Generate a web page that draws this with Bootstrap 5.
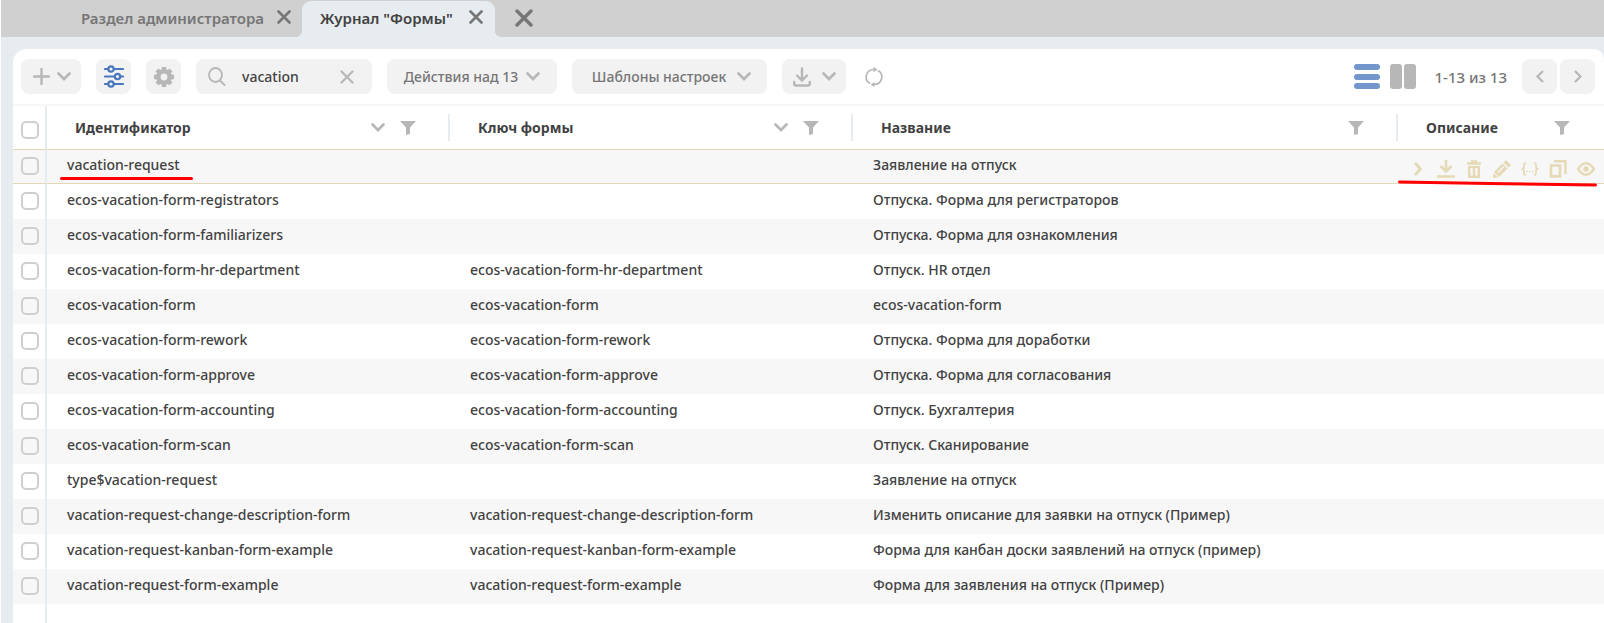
<!DOCTYPE html>
<html lang="ru">
<head>
<meta charset="utf-8">
<meta name="viewport" content="width=device-width, initial-scale=1">
<title>Журнал "Формы"</title>
<link href="https://cdn.jsdelivr.net/npm/bootstrap@5.3.0/dist/css/bootstrap.min.css" rel="stylesheet">
<style>
body { font-family: "Noto Sans", "Open Sans", sans-serif; font-size: 14px; font-weight: 500; line-height: 20px; color: #424242; background: #e6ecef; border-left: 1px solid #fff; overflow: hidden; }
svg { display: block; flex: none; fill: none; stroke: currentColor; }
button { font-weight: inherit; }
.tabs { height: 37px; background: #d0d0d0; padding-left: 64px; font-weight: 600; }
.tabs a { color: #767676; text-decoration: none; font-size: 15px; }
.tabs button { color: #767676; border: 0; background: none; padding: 0 0 2px; }
.tab-item { padding: 0 11px 2px 16px; gap: 13px; }
.tab-item.current { position: relative; background: #e6ecef; border-radius: 9px 9px 0 0; margin-top: 1px; padding: 0 12px 2px 18px; gap: 16px; }
.tab-item.current::before, .tab-item.current::after { content: ""; position: absolute; bottom: 0; width: 6px; height: 6px; }
.tab-item.current::before { right: 100%; background: radial-gradient(circle at 0 0, transparent 6px, #e6ecef 6px); }
.tab-item.current::after { left: 100%; background: radial-gradient(circle at 100% 0, transparent 6px, #e6ecef 6px); }
.tab-item.current a { color: #424242; }
.close-all { margin-left: 20px; }
.panel { background: #fff; margin: 12px 0 0 12px; border-radius: 14px 10px 0 0; }
.toolbar { padding: 10px 9px 10px 8px; gap: 15px; border-bottom: 2px solid #f7f7f7; }
.tool { height: 35px; border: 0; border-radius: 8px; background: #f2f2f2; color: #767676; padding: 0; display: flex; align-items: center; justify-content: center; }
.tool svg, .refresh { color: #b7b7b7; }
.tool.on svg { color: #4a76bd; }
.w-sq { width: 35px; }
.w-add { width: 60px; gap: 7px; padding-left: 2px; }
.w-find { width: 176px; padding: 0 18px 0 12px; }
.w-find input { width: 100%; min-width: 0; border: 0; background: none; outline: 0; color: #424242; font-weight: inherit; padding: 0 0 0 16px; }
.w-find button { border: 0; background: none; padding: 0; }
.w-act { width: 170px; gap: 8px; }
.w-tpl { width: 195px; gap: 11px; padding-left: 4px; }
.w-exp { width: 64px; gap: 11px; }
.plain { border: 0; background: none; padding: 0; }
.paging { font-size: 15px; color: #767676; }
.pages-text { font-size: 15px; margin: 0 15px 0 18px; }
.list-bars rect { fill: #7396cd; stroke: none; }
.col-bars rect { fill: #b7b7b7; stroke: none; }
.gap-view { margin-left: 10px; }
.gap-page { margin-left: 3px; }
.forms { table-layout: fixed; width: 100%; border-collapse: separate; border-spacing: 0; }
.forms .c-pick { width: 34px; }
.forms .c-key { width: 403px; }
.forms .c-desc { width: 206px; }
.forms th { height: 43px; padding: 0; font-weight: 700; }
.forms td { height: 35px; padding: 0 20px 4px; white-space: nowrap; }
.forms .pick { width: 34px; padding: 0 0 2px 8px; border-right: 2px solid #e6ecef; }
.forms th.pick { padding: 5px 0 0 8px; }
.head-cell { height: 27px; padding: 0 32px 0 28px; gap: 15px; border-right: 2px solid #e6ecef; color: #424242; }
.head-cell.last { border: 0; padding-right: 34px; }
.head-cell svg { color: #b7b7b7; }
.forms tbody tr:nth-child(odd) { background: #f7f7f7; }
.forms tr.hover td { border-top: 1px solid #e0d8b9; border-bottom: 1px solid #e0d8b9; }
.box { appearance: none; display: block; width: 18px; height: 18px; margin: 0; border: 2px solid #cfcfcf; border-radius: 5px; background: #fff; }
tbody tr:nth-child(odd) .box { background: transparent; }
.row-tools { color: #e5dab5; margin: 8px -11px 0 -9px; }
.forms .row-tools button { color: inherit; }
.forms td.marked { position: relative; }
.mark-id { position: absolute; left: 13px; bottom: 3px; width: 133px; height: 3px; }
.mark-tools { position: absolute; right: 7px; bottom: -4px; width: 199px; height: 7px; }
.rest > div { width: 34px; border-right: 2px solid #e6ecef; }
</style>
<script src="https://cdn.jsdelivr.net/npm/bootstrap@5.3.0/dist/js/bootstrap.bundle.min.js"></script>
</head>
<body class="d-flex flex-column vh-100">
<svg width="0" height="0" class="position-absolute" aria-hidden="true">
  <symbol id="x" viewBox="0 0 14 14"><path d="M1.5 1.5l11 11M12.5 1.5l-11 11" stroke-width="2.6" stroke-linecap="round"/></symbol>
  <symbol id="down" viewBox="0 0 14 9"><path d="M1.5 1.5L7 7l5.500-5.500" stroke-width="2.7" stroke-linecap="round"/></symbol>
  <symbol id="funnel" viewBox="0 0 16 14"><path d="M0 0h16l-6 6.500V13l-4 1V6.500z" fill="currentColor" stroke="none"/></symbol>
</svg>
<nav class="tabs d-flex align-items-stretch flex-shrink-0">
  <div class="tab-item d-flex align-items-center"><a href="#">Раздел администратора</a><button aria-label="Закрыть"><svg width="14" height="14"><use href="#x"/></svg></button></div>
  <div class="tab-item current d-flex align-items-center"><a href="#">Журнал "Формы"</a><button aria-label="Закрыть"><svg width="14" height="14"><use href="#x"/></svg></button></div>
  <button class="close-all" aria-label="Закрыть все"><svg width="18" height="18" viewBox="0 0 18 18"><path d="M2 2l14 14M16 2L2 16" stroke-width="3.4" stroke-linecap="round"/></svg></button>
</nav>
<main class="panel flex-grow-1 d-flex flex-column">
  <div class="toolbar d-flex align-items-center">
    <button class="tool w-add" aria-label="Создать"><svg width="17" height="17"><path d="M8.500 1v15M1 8.500h15" stroke-width="2.400" stroke-linecap="round"/></svg><svg width="14" height="9"><use href="#down"/></svg></button>
    <button class="tool w-sq on" aria-label="Фильтры"><svg width="20" height="24" viewBox="0 0 20 24" stroke-width="2.200" stroke-linecap="round"><path d="M1 4h3M10 4h9M1 11.500h9M17 11.500h2M1 19h3M10 19h9"/><circle cx="7" cy="4" r="2.700"/><circle cx="13.500" cy="11.500" r="2.700"/><circle cx="7" cy="19" r="2.700"/></svg></button>
    <button class="tool w-sq" aria-label="Настройки"><svg width="20" height="20" viewBox="0 0 20 20"><circle cx="10" cy="10" r="5.700" stroke-width="4.600"/><path d="M10 0v4M10 16v4M0 10h4M16 10h4M3 3l3 3M14 14l3 3M17 3l-3 3M6 14l-3 3" stroke-width="4.400"/></svg></button>
    <div class="tool w-find"><svg width="18" height="19" viewBox="0 0 18 19"><ellipse cx="7.500" cy="8" rx="6.500" ry="7" stroke-width="1.800"/><path d="M12 13.500l4.500 4.500" stroke-width="1.800" stroke-linecap="round"/></svg><input type="text" value="vacation" aria-label="Поиск"><button aria-label="Очистить"><svg width="14" height="14" viewBox="0 0 14 14"><path d="M1.500 1.500l11 11M12.500 1.500l-11 11" stroke-width="2.200" stroke-linecap="round"/></svg></button></div>
    <button class="tool w-act"><span>Действия над 13</span><svg width="14" height="9"><use href="#down"/></svg></button>
    <button class="tool w-tpl"><span>Шаблоны настроек</span><svg width="14" height="9"><use href="#down"/></svg></button>
    <button class="tool w-exp" aria-label="Экспорт"><svg width="18" height="20" viewBox="0 0 18 20" stroke-width="2.400" stroke-linecap="round"><path d="M9 1.500v11M4 8.500l5 5 5-5M1.200 15v1.500q0 2 2 2h11.600q2 0 2-2V15"/></svg><svg width="14" height="9"><use href="#down"/></svg></button>
    <button class="plain refresh ms-1" aria-label="Обновить"><svg width="18" height="20" viewBox="0 0 18 20" stroke-width="1.700"><path d="M5 16.500A7.500 7.500 0 0 1 9 2.500h2M13 3.500A7.500 7.500 0 0 1 9 17.500H7"/><path d="M8.500 0l4 2.600-4 2.600zM9.500 15l-4 2.500 4 2.500z" fill="currentColor" stroke="none"/></svg></button>
    <div class="paging d-flex align-items-center ms-auto">
      <button class="plain" aria-label="Список"><svg class="list-bars" width="26" height="26"><rect width="26" height="6" rx="3"/><rect y="10" width="26" height="6" rx="3"/><rect y="19" width="26" height="6" rx="3"/></svg></button>
      <button class="plain gap-view" aria-label="Колонки"><svg class="col-bars" width="26" height="26"><rect width="12" height="25" rx="3"/><rect x="14" width="12" height="25" rx="3"/></svg></button>
      <span class="pages-text">1-13 из 13</span>
      <button class="tool w-sq" aria-label="Назад"><svg width="8" height="13" viewBox="0 0 8 13"><path d="M7 1L1.500 6.500 7 12" stroke-width="2.200"/></svg></button>
      <button class="tool w-sq gap-page" aria-label="Вперёд"><svg width="8" height="13" viewBox="0 0 8 13"><path d="M1 1l5.500 5.500L1 12" stroke-width="2.200"/></svg></button>
    </div>
  </div>
  <table class="forms">
    <colgroup><col class="c-pick"><col class="c-key"><col class="c-key"><col><col class="c-desc"></colgroup>
    <thead><tr>
      <th class="pick"><input type="checkbox" class="box" aria-label="Выбрать все"></th>
      <th><div class="head-cell d-flex align-items-center"><span class="me-auto">Идентификатор</span><svg width="14" height="9"><use href="#down"/></svg><svg width="16" height="14"><use href="#funnel"/></svg></div></th>
      <th><div class="head-cell d-flex align-items-center"><span class="me-auto">Ключ формы</span><svg width="14" height="9"><use href="#down"/></svg><svg width="16" height="14"><use href="#funnel"/></svg></div></th>
      <th><div class="head-cell d-flex align-items-center"><span class="me-auto">Название</span><svg width="16" height="14"><use href="#funnel"/></svg></div></th>
      <th><div class="head-cell last d-flex align-items-center"><span class="me-auto">Описание</span><svg width="16" height="14"><use href="#funnel"/></svg></div></th>
    </tr></thead>
    <tbody>
      <tr class="hover"><td class="pick"><input type="checkbox" class="box" aria-label="Выбрать"></td>
        <td class="marked">vacation-request<svg class="mark-id" viewBox="0 0 133 3"><path d="M1.500 1.500h130" stroke="#f00" stroke-width="3" stroke-linecap="round"/></svg></td><td></td><td>Заявление на отпуск</td>
        <td class="marked"><div class="row-tools d-flex align-items-center justify-content-between">
          <button class="plain" aria-label="Открыть"><svg width="18" height="18" viewBox="0 0 18 18"><path d="M6 3l5.500 6L6 15" stroke-width="2.800"/></svg></button>
          <button class="plain" aria-label="Скачать"><svg width="18" height="18" viewBox="0 0 18 18"><path d="M9 0v11M3.500 6L9 11.500 14.500 6" stroke-width="2.600"/><path d="M0 16.500h18" stroke-width="2.600"/></svg></button>
          <button class="plain" aria-label="Удалить"><svg width="18" height="18" viewBox="0 0 18 18"><path d="M2 3.500h14M6 1.500h6" stroke-width="2.400"/><path d="M4.200 6v10.700h9.600V6M9 6v11" stroke-width="2.400"/><path d="M3 7h12" stroke-width="2"/></svg></button>
          <button class="plain" aria-label="Изменить"><svg width="18" height="18" viewBox="0 0 18 18"><g fill="currentColor" stroke="none"><path d="M13 0l5 5-2.500 2.500-5-5zM9.500 3.500l5 5L6 17l-5-5zM.500 13l4.500 4.500L0 18z"/></g><path d="M5 12.500l6-6" stroke="#f7f7f7" stroke-width="1.400"/></svg></button>
          <button class="plain" aria-label="Код"><svg width="18" height="18" viewBox="0 0 18 18" stroke-width="1.700"><path d="M5 3Q3 3 3 5v2q0 2-2.500 2Q3 9 3 11v2q0 2 2 2M13 3q2 0 2 2v2q0 2 2.500 2Q15 9 15 11v2q0 2-2 2"/><path d="M5 11.500h8" stroke-dasharray="1.600 1.400" stroke-width="1.600"/></svg></button>
          <button class="plain" aria-label="Копировать"><svg width="18" height="18" viewBox="0 0 18 18"><path d="M2 5.500h9v10.800H2z" stroke-width="2.700"/><path d="M5 1.200h11.500V14" stroke-width="2.400"/></svg></button>
          <button class="plain" aria-label="Просмотр"><svg width="18" height="18" viewBox="0 0 18 18"><path d="M1 9q8-11.500 16 0-8 11.500-16 0z" stroke-width="2.400"/><circle cx="9" cy="9" r="2.800" fill="currentColor" stroke="none"/></svg></button>
        </div><svg class="mark-tools" viewBox="0 0 199 7"><path d="M1.500 2l90 1.500 106 1.500" stroke="#f00" stroke-width="3" stroke-linecap="round"/></svg></td></tr>
      <tr><td class="pick"><input type="checkbox" class="box" aria-label="Выбрать"></td><td>ecos-vacation-form-registrators</td><td></td><td>Отпуска. Форма для регистраторов</td><td></td></tr>
      <tr><td class="pick"><input type="checkbox" class="box" aria-label="Выбрать"></td><td>ecos-vacation-form-familiarizers</td><td></td><td>Отпуска. Форма для ознакомления</td><td></td></tr>
      <tr><td class="pick"><input type="checkbox" class="box" aria-label="Выбрать"></td><td>ecos-vacation-form-hr-department</td><td>ecos-vacation-form-hr-department</td><td>Отпуск. HR отдел</td><td></td></tr>
      <tr><td class="pick"><input type="checkbox" class="box" aria-label="Выбрать"></td><td>ecos-vacation-form</td><td>ecos-vacation-form</td><td>ecos-vacation-form</td><td></td></tr>
      <tr><td class="pick"><input type="checkbox" class="box" aria-label="Выбрать"></td><td>ecos-vacation-form-rework</td><td>ecos-vacation-form-rework</td><td>Отпуска. Форма для доработки</td><td></td></tr>
      <tr><td class="pick"><input type="checkbox" class="box" aria-label="Выбрать"></td><td>ecos-vacation-form-approve</td><td>ecos-vacation-form-approve</td><td>Отпуска. Форма для согласования</td><td></td></tr>
      <tr><td class="pick"><input type="checkbox" class="box" aria-label="Выбрать"></td><td>ecos-vacation-form-accounting</td><td>ecos-vacation-form-accounting</td><td>Отпуск. Бухгалтерия</td><td></td></tr>
      <tr><td class="pick"><input type="checkbox" class="box" aria-label="Выбрать"></td><td>ecos-vacation-form-scan</td><td>ecos-vacation-form-scan</td><td>Отпуск. Сканирование</td><td></td></tr>
      <tr><td class="pick"><input type="checkbox" class="box" aria-label="Выбрать"></td><td>type$vacation-request</td><td></td><td>Заявление на отпуск</td><td></td></tr>
      <tr><td class="pick"><input type="checkbox" class="box" aria-label="Выбрать"></td><td>vacation-request-change-description-form</td><td>vacation-request-change-description-form</td><td>Изменить описание для заявки на отпуск (Пример)</td><td></td></tr>
      <tr><td class="pick"><input type="checkbox" class="box" aria-label="Выбрать"></td><td>vacation-request-kanban-form-example</td><td>vacation-request-kanban-form-example</td><td>Форма для канбан доски заявлений на отпуск (пример)</td><td></td></tr>
      <tr><td class="pick"><input type="checkbox" class="box" aria-label="Выбрать"></td><td>vacation-request-form-example</td><td>vacation-request-form-example</td><td>Форма для заявления на отпуск (Пример)</td><td></td></tr>
    </tbody>
  </table>
  <div class="rest flex-grow-1 d-flex"><div></div></div>
</main>
</body>
</html>
